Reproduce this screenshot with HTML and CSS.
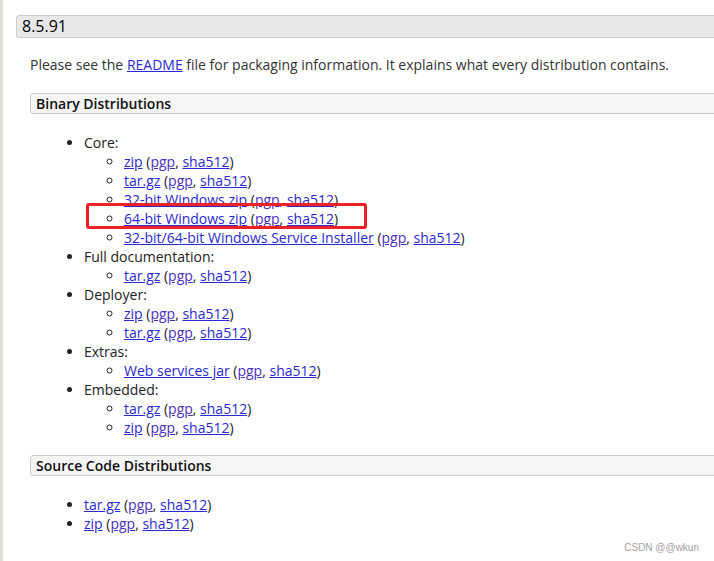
FILE: index.html
```html
<!DOCTYPE html>
<html>
<head>
<meta charset="utf-8">
<link rel="stylesheet" href="styles.css">
</head>
<body>
<div class="page">
  <h2 class="version">8.5.91</h2>
  <div class="content">
    <p class="intro">Please see the <a href="#" class="link">README</a> file for packaging information. It explains what every distribution contains.</p>
    <h3 class="subhead">Binary Distributions</h3>
    <ul class="list">
      <li>Core:
        <ul class="sublist">
          <li><a class="link" href="#">zip</a> (<a class="link visited" href="#">pgp</a>, <a class="link" href="#">sha512</a>)</li>
          <li><a class="link" href="#">tar.gz</a> (<a class="link visited" href="#">pgp</a>, <a class="link" href="#">sha512</a>)</li>
          <li><a class="link" href="#">32-bit Windows zip</a> (<a class="link visited" href="#">pgp</a>, <a class="link" href="#">sha512</a>)</li>
          <li class="marked"><a class="link" href="#">64-bit Windows zip</a> (<a class="link visited" href="#">pgp</a>, <a class="link" href="#">sha512</a>)</li>
          <li><a class="link" href="#">32-bit/64-bit Windows Service Installer</a> (<a class="link visited" href="#">pgp</a>, <a class="link" href="#">sha512</a>)</li>
        </ul>
      </li>
      <li>Full documentation:
        <ul class="sublist">
          <li><a class="link" href="#">tar.gz</a> (<a class="link visited" href="#">pgp</a>, <a class="link" href="#">sha512</a>)</li>
        </ul>
      </li>
      <li>Deployer:
        <ul class="sublist">
          <li><a class="link" href="#">zip</a> (<a class="link visited" href="#">pgp</a>, <a class="link" href="#">sha512</a>)</li>
          <li><a class="link" href="#">tar.gz</a> (<a class="link visited" href="#">pgp</a>, <a class="link" href="#">sha512</a>)</li>
        </ul>
      </li>
      <li>Extras:
        <ul class="sublist">
          <li><a class="link" href="#">Web services jar</a> (<a class="link visited" href="#">pgp</a>, <a class="link" href="#">sha512</a>)</li>
        </ul>
      </li>
      <li>Embedded:
        <ul class="sublist">
          <li><a class="link" href="#">tar.gz</a> (<a class="link visited" href="#">pgp</a>, <a class="link" href="#">sha512</a>)</li>
          <li><a class="link" href="#">zip</a> (<a class="link visited" href="#">pgp</a>, <a class="link" href="#">sha512</a>)</li>
        </ul>
      </li>
    </ul>
    <h3 class="subhead source">Source Code Distributions</h3>
    <ul class="list">
      <li><a class="link" href="#">tar.gz</a> (<a class="link visited" href="#">pgp</a>, <a class="link" href="#">sha512</a>)</li>
      <li><a class="link" href="#">zip</a> (<a class="link visited" href="#">pgp</a>, <a class="link" href="#">sha512</a>)</li>
    </ul>
  </div>
  <div class="watermark">CSDN @@wkun</div>
</div>
</body>
</html>
```

FILE: styles.css
```css
html, body {
  margin: 0;
  padding: 0;
  background: #ffffff;
  overflow: hidden;
}

.page {
  position: relative;
  height: 561px;
  box-sizing: border-box;
  border-left: 3px solid #e2dfda;
  padding-top: 15px;
  font-family: "Open Sans", "DejaVu Sans", sans-serif;
  font-size: 14px;
  line-height: 19px;
  color: #333333;
}

.version {
  margin: 0 -20px 0 13px;
  height: 23px;
  box-sizing: border-box;
  background: #e8e8e8;
  border: 1px solid #cccccc;
  border-radius: 3px;
  padding-left: 5px;
  font-size: 16px;
  font-weight: normal;
  line-height: 21px;
  color: #000000;
}

.content {
  padding-left: 27px;
}

.intro {
  margin: 17px 0 0 0;
}

.link {
  color: #2a2ad0;
  text-decoration: underline;
}

.link.visited {
  color: #4a30c0;
}

.subhead {
  margin: 19px -20px 0 0;
  height: 21px;
  box-sizing: border-box;
  background: #f5f5f5;
  border: 1px solid #cccccc;
  border-radius: 3px;
  padding-left: 5px;
  font-size: 14px;
  font-weight: 600;
  line-height: 19px;
  color: #111111;
}

.subhead.source {
  margin-top: 18px;
}

.list {
  margin: 19px 0 0 0;
  padding-left: 54px;
  list-style: disc;
}

.list li {
  color: #222222;
}

.sublist {
  margin: 0;
  padding-left: 40px;
  list-style: circle;
}

.marked {
  position: relative;
}

.marked::after {
  content: "";
  position: absolute;
  left: -38px;
  top: -6px;
  width: 281px;
  height: 26px;
  box-sizing: border-box;
  border: 3px solid #ec2227;
  border-radius: 3px;
  pointer-events: none;
}

.watermark {
  position: absolute;
  right: 15px;
  bottom: 6px;
  font-family: "Liberation Sans", "DejaVu Sans", sans-serif;
  font-size: 10px;
  line-height: 14px;
  color: #a0a0a0;
}
```
